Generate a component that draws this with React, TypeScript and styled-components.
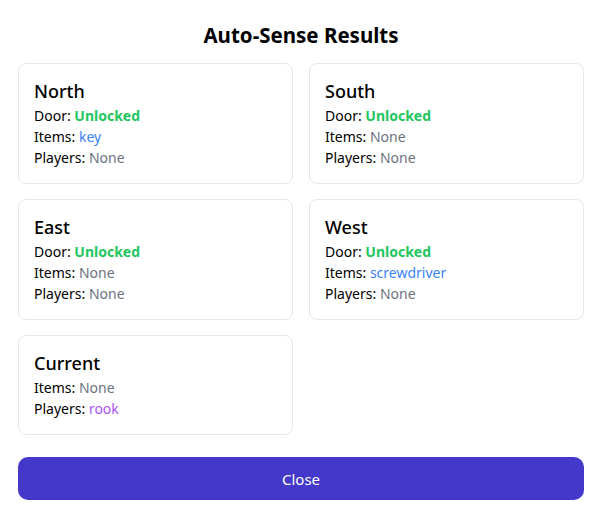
import React from "react";
import styled, { createGlobalStyle } from "styled-components";

const Global = createGlobalStyle`
  html, body { margin: 0; padding: 0; background: #ffffff; }
  body { font-family: "Noto Sans", "Open Sans", sans-serif; color: #111111; }
`;

const Page = styled.div`
  width: 602px;
  box-sizing: border-box;
  padding: 20px 18px 18px;
  display: flex;
  flex-direction: column;
`;

const Title = styled.h2`
  margin: 0 0 13px;
  font-size: 20.5px;
  line-height: 30px;
  font-weight: 700;
  text-align: center;
  color: #000;
`;

const Grid = styled.div`
  display: grid;
  grid-template-columns: 1fr 1fr;
  gap: 15px 16px;
`;

const Card = styled.div`
  border: 1px solid #e5e7eb;
  border-radius: 8px;
  padding: 13px 15px 15px;
  display: flex;
  flex-direction: column;
`;

const CardTitle = styled.div`
  font-size: 18px;
  line-height: 28px;
  font-weight: 500;
  color: #000;
`;

const Line = styled.div`
  font-size: 14px;
  line-height: 21px;
  color: #000;
`;

type Tone = "green" | "blue" | "gray" | "purple";
const toneColor: Record<Tone, string> = {
  green: "#22c55e",
  blue: "#3b82f6",
  gray: "#6b7280",
  purple: "#a855f7",
};

const Value = styled.span<{ $tone: Tone; $bold?: boolean }>`
  color: ${(p) => toneColor[p.$tone]};
  font-weight: ${(p) => (p.$bold ? 700 : 400)};
`;

const CloseButton = styled.button`
  margin-top: 22px;
  height: 43px;
  border: none;
  border-radius: 10px;
  background: #4338ca;
  color: #ffffff;
  font-family: inherit;
  font-size: 15px;
  cursor: pointer;
`;

type Row = { label: string; value: string; tone: Tone; bold?: boolean };
type Dir = { name: string; rows: Row[] };

const dirs: Dir[] = [
  {
    name: "North",
    rows: [
      { label: "Door", value: "Unlocked", tone: "green", bold: true },
      { label: "Items", value: "key", tone: "blue" },
      { label: "Players", value: "None", tone: "gray" },
    ],
  },
  {
    name: "South",
    rows: [
      { label: "Door", value: "Unlocked", tone: "green", bold: true },
      { label: "Items", value: "None", tone: "gray" },
      { label: "Players", value: "None", tone: "gray" },
    ],
  },
  {
    name: "East",
    rows: [
      { label: "Door", value: "Unlocked", tone: "green", bold: true },
      { label: "Items", value: "None", tone: "gray" },
      { label: "Players", value: "None", tone: "gray" },
    ],
  },
  {
    name: "West",
    rows: [
      { label: "Door", value: "Unlocked", tone: "green", bold: true },
      { label: "Items", value: "screwdriver", tone: "blue" },
      { label: "Players", value: "None", tone: "gray" },
    ],
  },
  {
    name: "Current",
    rows: [
      { label: "Items", value: "None", tone: "gray" },
      { label: "Players", value: "rook", tone: "purple" },
    ],
  },
];

export default function App() {
  return (
    <Page>
      <Global />
      <Title>Auto-Sense Results</Title>
      <Grid>
        {dirs.map((d) => (
          <Card key={d.name}>
            <CardTitle>{d.name}</CardTitle>
            {d.rows.map((r) => (
              <Line key={r.label}>
                {r.label}: <Value $tone={r.tone} $bold={r.bold}>{r.value}</Value>
              </Line>
            ))}
          </Card>
        ))}
      </Grid>
      <CloseButton>Close</CloseButton>
    </Page>
  );
}
